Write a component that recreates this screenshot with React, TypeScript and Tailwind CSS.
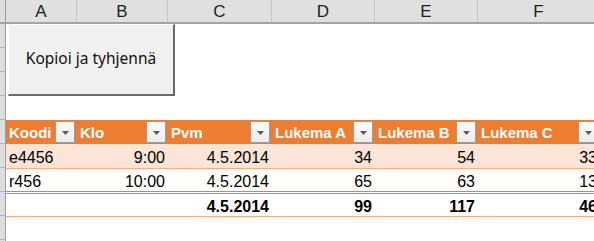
import React from "react";

type Col = {
  letter: string;
  width: string;
  head: string;
  align: "left" | "right";
  r1: string;
  r2: string;
  total: string;
};

const columns: Col[] = [
  { letter: "A", width: "w-[71px]", head: "Koodi", align: "left", r1: "e4456", r2: "r456", total: "" },
  { letter: "B", width: "w-[91px]", head: "Klo", align: "right", r1: "9:00", r2: "10:00", total: "" },
  { letter: "C", width: "w-[104px]", head: "Pvm", align: "right", r1: "4.5.2014", r2: "4.5.2014", total: "4.5.2014" },
  { letter: "D", width: "w-[103px]", head: "Lukema A", align: "right", r1: "34", r2: "65", total: "99" },
  { letter: "E", width: "w-[103px]", head: "Lukema B", align: "right", r1: "54", r2: "63", total: "117" },
  { letter: "F", width: "w-[122px]", head: "Lukema C", align: "right", r1: "33", r2: "13", total: "46" },
];

const FilterButton = () => (
  <div className="flex h-[22px] w-[20px] flex-none items-center justify-center border border-[#9c9c9c] bg-gradient-to-b from-[#fbfbfb] to-[#ececec]">
    <svg width="7" height="4" viewBox="0 0 7 4" className="mt-[1px]">
      <path d="M0 0h7L3.5 4z" fill="#5a5a5a" />
    </svg>
  </div>
);

const Cell = ({ col, text, bold }: { col: Col; text: string; bold?: boolean }) => (
  <div
    className={`${col.width} flex flex-none items-center overflow-visible whitespace-nowrap px-[3px] pt-[3px] ${
      col.align === "right" ? "justify-end" : "justify-start"
    } ${bold ? "font-bold" : ""}`}
  >
    {text}
  </div>
);

export default function App() {
  return (
    <div className="flex h-[241px] w-[594px] overflow-hidden bg-white font-['Liberation_Sans',Arial,sans-serif] text-[16px] text-black">
      {/* Row header strip */}
      <div className="flex w-[6px] flex-none flex-col border-r border-[#9e9e9e] bg-[#dedede]">
        <div className="h-[24px] flex-none border-b-2 border-[#a3a3a3]" />
        {Array.from({ length: 9 }).map((_, i) => (
          <div key={i} className="h-[24px] flex-none border-b border-[#b4b4b4]" />
        ))}
      </div>

      <div className="flex min-w-0 flex-1 flex-col">
        {/* Column letters */}
        <div className="flex h-[24px] flex-none border-b-2 border-[#a3a3a3] bg-[#e0e0e0] text-[17px] text-[#1e1e1e]">
          {columns.map((c) => (
            <div
              key={c.letter}
              className={`${c.width} flex flex-none items-center justify-center border-r border-[#c4c4c4] pt-[1px]`}
            >
              {c.letter}
            </div>
          ))}
        </div>

        {/* Button area */}
        <div className="flex h-[72px] flex-none items-start pl-[2px]">
          <button className="flex h-[72px] w-[167px] items-center justify-center border-t border-l border-t-[#fdfdfd] border-l-[#fdfdfd] border-r-2 border-b-2 border-r-[#6a6a6a] border-b-[#6a6a6a] bg-[#f0f0f0] pb-[2px] font-['Noto_Sans',sans-serif] text-[15.5px] text-[#111]">
            Kopioi ja tyhjennä
          </button>
        </div>

        <div className="h-[24px] flex-none" />

        {/* Table header */}
        <div className="flex h-[24px] flex-none bg-[#ed7d31] text-[15px] font-bold text-white">
          {columns.map((c) => (
            <div
              key={c.head}
              className={`${c.width} flex flex-none items-center justify-between pl-[3px] pr-[2px]`}
            >
              <span className="pt-[2px]">{c.head}</span>
              <FilterButton />
            </div>
          ))}
        </div>

        {/* Row 1 */}
        <div className="flex h-[25px] flex-none border-b border-[#f4b084] bg-[#fce4d6]">
          {columns.map((c) => (
            <Cell key={c.letter} col={c} text={c.r1} />
          ))}
        </div>

        {/* Row 2 */}
        <div className="flex h-[25px] flex-none border-b-[3px] border-double border-[#ed7d31]">
          {columns.map((c) => (
            <Cell key={c.letter} col={c} text={c.r2} />
          ))}
        </div>

        {/* Totals */}
        <div className="flex h-[23px] flex-none border-b border-[#f4b084]">
          {columns.map((c) => (
            <Cell key={c.letter} col={c} text={c.total} bold />
          ))}
        </div>
      </div>
    </div>
  );
}
